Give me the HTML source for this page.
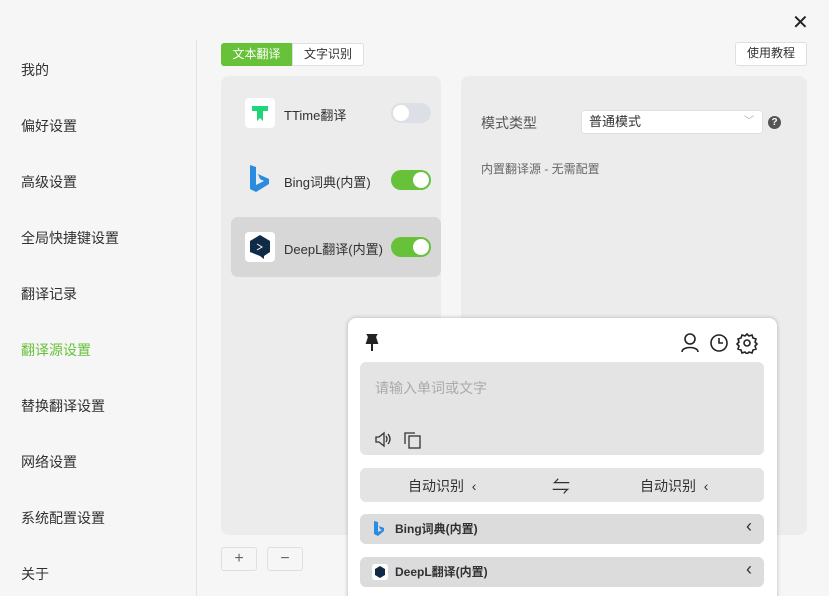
<!DOCTYPE html>
<html style="overflow:hidden;width:829px;height:596px"><head><meta charset="utf-8"><style>
*{box-sizing:border-box;margin:0;padding:0}
body{width:829px;height:596px;background:#f6f6f6;font-family:"Liberation Sans","Noto Sans CJK SC",sans-serif;position:relative;overflow:hidden;color:#303133}
.abs{position:absolute}
.side div{position:absolute;left:21px;font-size:14px;color:#303133}
.tog{position:absolute;width:40px;height:20px;border-radius:10px}
.tog i{position:absolute;top:2px;width:16px;height:16px;border-radius:50%;background:#fff}
.row{position:absolute;left:360px;width:404px;background:#dcdcdc;border-radius:6px}
</style></head><body>
<div class="abs" style="left:196px;top:40px;width:1px;height:556px;background:#e4e4e4"></div>
<div class="abs" style="left:792px;top:10px;font-size:20px;color:#222">✕</div>
<div class="side">
<div style="top:60px">我的</div><div style="top:116px">偏好设置</div><div style="top:172px">高级设置</div>
<div style="top:228px">全局快捷键设置</div><div style="top:284px">翻译记录</div>
<div style="top:340px;color:#67c23a">翻译源设置</div><div style="top:396px">替换翻译设置</div>
<div style="top:452px">网络设置</div><div style="top:508px">系统配置设置</div><div style="top:564px">关于</div>
</div>
<div class="abs" style="left:221px;top:43px;width:71px;height:23px;background:#67c23a;color:#fff;font-size:12px;line-height:22px;text-align:center;border-radius:3px 0 0 3px">文本翻译</div>
<div class="abs" style="left:292px;top:43px;width:72px;height:23px;background:#fff;border:1px solid #dcdfe6;font-size:12px;line-height:20px;text-align:center;border-radius:0 3px 3px 0">文字识别</div>
<div class="abs" style="left:735px;top:42px;width:72px;height:24px;background:#fff;border:1px solid #dcdfe6;font-size:12px;line-height:21px;text-align:center;border-radius:3px">使用教程</div>
<div class="abs" style="left:221px;top:76px;width:220px;height:459px;background:#ececec;border-radius:8px"></div>
<div class="abs" style="left:231px;top:217px;width:210px;height:60px;background:#d7d7d7;border-radius:7px"></div>
<div class="abs" style="left:245px;top:98px;width:30px;height:30px;background:#fff;border-radius:4px"><svg width="30" height="30"><path d="M7 8h16v5h-5v10l-3-3-3 3V13H7z" fill="#1ed67a"/></svg></div>
<div class="abs" style="left:284px;top:105px;font-size:13px">TTime翻译</div>
<div class="tog" style="left:391px;top:103px;background:#dcdfe6"><i style="left:2px"></i></div>
<svg class="abs" style="left:245px;top:163px" width="30" height="34"><path d="M5 2l6 2v18l8-4-4-2-2-5 11 5v5l-13 8-6-3z" fill="#2b8be0"/></svg>
<div class="abs" style="left:284px;top:172px;font-size:13px">Bing词典(内置)</div>
<div class="tog" style="left:391px;top:170px;background:#67c23a"><i style="left:22px"></i></div>
<div class="abs" style="left:245px;top:232px;width:30px;height:30px;background:#fff;border-radius:4px"><svg width="30" height="30"><path d="M15 3l10 6v11l-6 4v3l-4-3-10-4V9z" fill="#0f2b46"/><path d="M12 12l5 3-5 3" stroke="#fff" fill="none"/></svg></div>
<div class="abs" style="left:284px;top:239px;font-size:13px">DeepL翻译(内置)</div>
<div class="tog" style="left:391px;top:237px;background:#67c23a"><i style="left:22px"></i></div>
<div class="abs" style="left:461px;top:76px;width:346px;height:459px;background:#ececec;border-radius:8px"></div>
<div class="abs" style="left:481px;top:113px;font-size:14px;color:#555">模式类型</div>
<div class="abs" style="left:581px;top:110px;width:182px;height:24px;background:#fff;border:1px solid #dcdfe6;border-radius:3px;font-size:13px;line-height:21px;padding-left:7px">普通模式<span style="position:absolute;right:8px;color:#aaa;font-size:10px">﹀</span></div>
<div class="abs" style="left:768px;top:116px;width:13px;height:13px;border-radius:50%;background:#555;color:#fff;font-size:10px;line-height:13px;text-align:center;font-weight:bold">?</div>
<div class="abs" style="left:481px;top:160px;font-size:12px;color:#666">内置翻译源 - 无需配置</div>
<div class="abs" style="left:221px;top:547px;width:36px;height:24px;border:1px solid #dcdfe6;border-radius:3px;background:#f6f6f6;text-align:center;line-height:22px;color:#666">+</div>
<div class="abs" style="left:267px;top:547px;width:36px;height:24px;border:1px solid #dcdfe6;border-radius:3px;background:#f6f6f6;text-align:center;line-height:22px;color:#666">−</div>
<div class="abs" style="left:348px;top:318px;width:429px;height:290px;background:#fff;border-radius:8px;box-shadow:0 0 4px rgba(0,0,0,.25)"></div>
<svg class="abs" style="left:364px;top:334px" width="16" height="18"><path d="M4 1h8l-1 2 2 6H3l2-6zM8 9v8" stroke="#222" stroke-width="2" fill="#222"/></svg>
<svg class="abs" style="left:680px;top:332px" width="80" height="22"><g stroke="#222" stroke-width="1.6" fill="none"><circle cx="10" cy="7" r="5"/><path d="M2 20c0-6 16-6 16 0"/><circle cx="39" cy="11" r="8"/><path d="M39 6v5h4"/><circle cx="67" cy="11" r="3"/><path d="M67 2l2 2 3-1 1 3 3 1-1 3 2 2-2 2 1 3-3 1-1 3-3-1-2 2-2-2-3 1-1-3-3-1 1-3-2-2 2-2-1-3 3-1 1-3 3 1z"/></g></svg>
<div class="abs" style="left:360px;top:362px;width:404px;height:93px;background:#e4e4e4;border-radius:6px"></div>
<div class="abs" style="left:375px;top:378px;font-size:14px;color:#aaa">请输入单词或文字</div>
<svg class="abs" style="left:374px;top:431px" width="50" height="18"><g stroke="#333" stroke-width="1.3" fill="none"><path d="M2 6h3l5-4v13l-5-4H2z"/><path d="M12 5q2 3 0 6M14 3q4 5 0 10"/><rect x="35" y="5" width="11" height="12"/><path d="M31 13V2h10"/></g></svg>
<div class="abs" style="left:360px;top:468px;width:404px;height:34px;background:#e4e4e4;border-radius:6px;font-size:14px">
<span class="abs" style="left:48px;top:8px">自动识别 &nbsp;‹</span>
<span class="abs" style="left:192px;top:5px;font-size:18px">⇋</span>
<span class="abs" style="left:280px;top:8px">自动识别 &nbsp;‹</span></div>
<div class="row" style="top:514px;height:30px"><svg class="abs" style="left:13px;top:7px" width="12" height="16"><path d="M1 0l4 1v10l4-2-2-1-1-3 5 2v3l-6 5-4-2z" fill="#2b8be0"/></svg><span class="abs" style="left:35px;top:6px;font-size:12px;font-weight:bold">Bing词典(内置)</span><span class="abs" style="right:12px;top:2px;font-size:18px">‹</span></div>
<div class="row" style="top:557px;height:30px"><svg class="abs" style="left:12px;top:7px" width="16" height="16"><rect width="16" height="16" rx="3" fill="#fff"/><path d="M8 2l5 3v6l-5 3-5-3V5z" fill="#0f2b46"/></svg><span class="abs" style="left:35px;top:6px;font-size:12px;font-weight:bold">DeepL翻译(内置)</span><span class="abs" style="right:12px;top:2px;font-size:18px">‹</span></div>
</body></html>
